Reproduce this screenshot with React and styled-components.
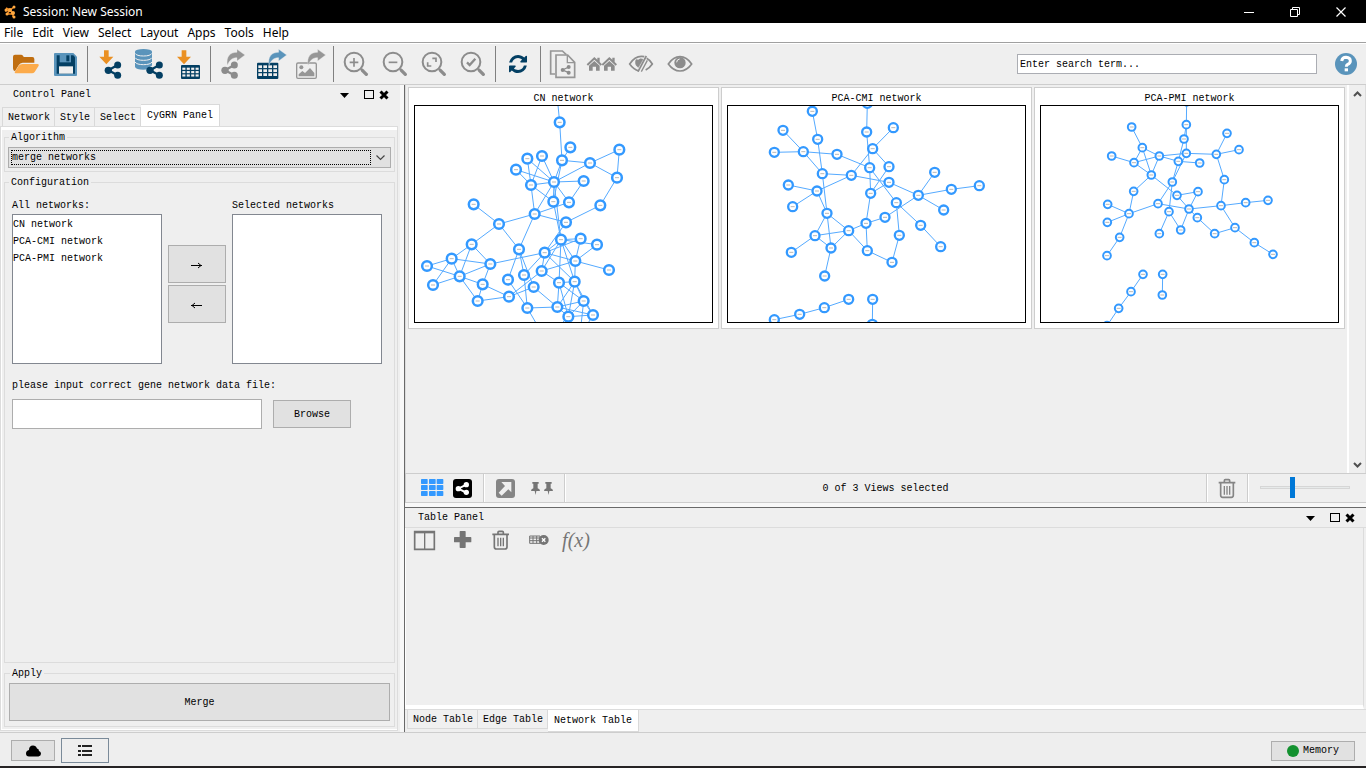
import React from "react";
import styled, { createGlobalStyle, css } from "styled-components";

const MONO = '"Liberation Mono", "Noto Sans CJK SC", monospace';
const SANS = '"Noto Sans", "Open Sans", sans-serif';
const GRAY = "#8c8c8c";
const NAVY = "#033f63";
const SKY = "#5a94bb";
const BLUE = "#3399ff";

const GlobalStyle = createGlobalStyle`
  *, *::before, *::after { box-sizing: border-box; }
  html, body { margin: 0; background: #efefef; }
  body { font: 10px/12px ${MONO}; color: #000; }
  button, input, select { font: inherit; color: inherit; margin: 0; }
`;

/* ---------- shell ---------- */
const Shell = styled.div`
  display: flex;
  flex-direction: column;
  min-height: 100vh;
  border-bottom: 2px solid #262324;
`;
const TitleBar = styled.header`
  display: flex;
  align-items: center;
  height: 23px;
  padding: 0 4px;
  gap: 7px;
  background: #000;
  color: #fff;
  font: 12px/20px ${SANS};
`;
const TitleText = styled.h1`
  flex: 1;
  margin: 0;
  font: inherit;
`;
const WindowButton = styled.button`
  width: 46px;
  height: 20px;
  padding: 0;
  border: 0;
  background: none;
  svg { display: block; margin: 0 auto; }
`;
const WindowButtons = styled.div`
  display: flex;
  margin-right: -2px;
`;
const MenuBar = styled.nav`
  display: flex;
  gap: 9px;
  height: 20px;
  padding: 0 4px;
  background: #fff;
  border-bottom: 1px solid #a0a0a0;
  font: 12px/19px ${SANS};
`;
const MenuLink = styled.a`
  color: #000;
  text-decoration: none;
`;
const ToolBar = styled.div`
  display: flex;
  align-items: center;
  height: 42px;
  padding: 0 9px 0 7px;
  border-top: 1px solid #fff;
  border-bottom: 1px solid #cdcdcd;
`;
const ToolButton = styled.button`
  display: block;
  padding: 0;
  border: 0;
  background: none;
  svg { display: block; }
`;
const ToolSeparator = styled.span`
  width: 1px;
  height: 36px;
  margin: 0 3px 0 2px;
  background: #808080;
`;
const SearchInput = styled.input`
  width: 300px;
  height: 20px;
  margin-left: auto;
  padding: 0 2px;
  border: 1px solid #abadb3;
  border-radius: 0;
  background: #fff;
  outline: 0;
  &::placeholder { color: #000; opacity: 1; }
`;
const HelpButton = styled(ToolButton)`
  margin-left: 18px;
`;
const Main = styled.main`
  display: flex;
  flex: 1;
`;

/* ---------- panels ---------- */
const Sidebar = styled.aside`
  display: flex;
  flex-direction: column;
  flex: 0 0 405px;
  padding-right: 6px;
  border-right: 1px solid #696969;
  box-shadow: inset -4px 0 #f8f8f8;
`;
const PanelHeader = styled.div`
  display: flex;
  align-items: center;
  height: 19px;
  padding: 0 ${(p) => (p.$wide ? 9 : 7)}px 0 13px;
`;
const PanelTitle = styled.h2`
  flex: 1;
  margin: 0;
  font: inherit;
`;
const PanelButton = styled.button`
  display: block;
  width: ${(p) => p.$w}px;
  height: 12px;
  padding: 0;
  border: 0;
  background: none;
  svg { display: block; }
`;
const TabRow = styled.div`
  display: flex;
  align-items: ${(p) => (p.$below ? "flex-start" : "flex-end")};
  padding-left: 2px;
`;
const Tab = styled.button`
  height: 19px;
  padding: 1px 4px 0 5px;
  border: 1px solid #d9d9d9;
  background: #f0f0f0;
  white-space: nowrap;
  & + & { border-left: 0; }
  ${(p) => (p.$below ? css`border-top: 0;` : css`border-bottom: 0;`)}
  ${(p) =>
    p.$active &&
    css`
      height: 22px;
      padding: 0 6px;
      background: #fff;
    `}
`;
const TabPane = styled.section`
  display: flex;
  flex-direction: column;
  flex: 1;
  gap: 3px;
  margin-bottom: 1px;
  padding: 3px 2px 3px 3px;
  border: 1px solid #dcdcdc;
  box-shadow: inset 0 3px #fff, inset 1px -1px #fff;
`;
const Group = styled.fieldset`
  display: flex;
  flex-direction: column;
  min-width: 0;
  margin: 0;
  padding: ${(p) => p.$pad || "3px"};
  border: 1px solid #dcdcdc;
  ${(p) => p.$grow && css`flex: 1;`}
`;
const Legend = styled.legend`
  margin-left: ${(p) => (p.$outdent ? -3 : 1)}px;
  padding: 2px 2px 0;
  line-height: 12px;
`;
const SelectFrame = styled.div`
  display: flex;
  align-items: center;
  height: 21px;
  padding-left: 2px;
  border: 1px solid #adadad;
  background: #e1e1e1;
  svg { margin: 0 5px; }
`;
const Select = styled.select`
  flex: 1;
  height: 15px;
  padding: 0;
  border: 1px dotted #000;
  border-radius: 0;
  background: none;
  appearance: none;
  outline: 0;
`;
const Transfer = styled.div`
  display: flex;
  align-items: flex-end;
  gap: 6px;
  padding-top: 8px;
`;
const ListField = styled.label`
  display: flex;
  flex-direction: column;
  gap: 2px;
`;
const ListBox = styled.select`
  width: 150px;
  height: 150px;
  padding: 4px 0;
  border: 1px solid #828790;
  border-radius: 0;
  background: #fff;
  outline: 0;
  overflow: hidden;
`;
const ListItem = styled.option`
  height: 17px;
  min-height: 17px;
  padding: 0;
  line-height: 17px;
`;
const TransferButtons = styled.div`
  display: flex;
  flex-direction: column;
  gap: 2px;
  align-self: flex-end;
  margin-bottom: 41px;
`;
const PushButton = styled.button`
  width: ${(p) => (p.$w ? `${p.$w}px` : "100%")};
  height: ${(p) => p.$h}px;
  padding: 1px 0 0;
  border: 1px solid #adadad;
  background: #e1e1e1;
  svg { display: block; margin: 0 auto; }
`;
const FileLabel = styled.label`
  margin-top: 16px;
`;
const FileRow = styled.div`
  display: flex;
  align-items: center;
  gap: 11px;
  margin-top: 7px;
`;
const FileInput = styled.input`
  width: 250px;
  height: 30px;
  padding: 0 4px;
  border: 1px solid #adadad;
  border-radius: 0;
  background: #fff;
  outline: 0;
`;

/* ---------- network views ---------- */
const Content = styled.div`
  display: flex;
  flex-direction: column;
  flex: 1;
  min-width: 0;
`;
const ViewArea = styled.div`
  display: flex;
  flex: 1;
  border-left: 1px solid #dcdcdc;
`;
const CardGrid = styled.div`
  display: grid;
  flex: 1;
  grid-template-columns: repeat(auto-fill, 311px);
  align-content: start;
  gap: 2px;
  padding: 2px 0 0 2px;
`;
const Card = styled.figure`
  margin: 0;
  padding: 4px 5px 5px;
  border: 1px solid #cdcdcd;
  background: #fff;
`;
const CardTitle = styled.figcaption`
  line-height: 13px;
  text-align: center;
`;
const Drawing = styled.svg`
  display: block;
  width: 100%;
  border: 1px solid #000;
`;
const ScrollTrack = styled.div`
  display: flex;
  flex-direction: column;
  justify-content: space-between;
  width: 19px;
  padding: 6px 0 5px 4px;
  border-left: 2px solid #fff;
  border-right: 1px solid #dcdcdc;
`;
const ViewBar = styled.div`
  display: flex;
  height: 30px;
  border: 1px solid #cdcdcd;
  border-right: 0;
`;
const BarSegment = styled.div`
  display: flex;
  align-items: center;
  gap: ${(p) => p.$gap || 0}px;
  padding: ${(p) => p.$pad};
  border-right: 1px solid #cdcdcd;
  box-shadow: 1px 0 #fff;
`;
const BarStatus = styled.output`
  flex: 1;
  padding-top: 1px;
  border-right: 1px solid #cdcdcd;
  box-shadow: 1px 0 #fff;
  line-height: 28px;
  text-align: center;
`;
const ZoomSlider = styled.input`
  width: 90px;
  height: 21px;
  margin: 3px 16px 3px 12px;
  background: none;
  appearance: none;
  &::-webkit-slider-runnable-track {
    height: 3px;
    border: 1px solid #d6d6d6;
    background: #e7eaea;
  }
  &::-webkit-slider-thumb {
    appearance: none;
    width: 5px;
    height: 21px;
    margin-top: -10px;
    background: #0078d7;
  }
`;
const TablePanel = styled.section`
  display: flex;
  flex-direction: column;
  flex: 0 0 229px;
  border-top: 4px solid #f8f8f8;
`;
const TableHead = styled.div`
  border-top: 1px solid #696969;
  border-bottom: 1px solid #dcdcdc;
`;
const TableBody = styled.div`
  flex: 1;
  margin-right: 2px;
  border-left: 1px solid #fff;
  border-right: 1px solid #dcdcdc;
  border-bottom: 4px solid #fff;
`;
const TableTools = styled.div`
  display: flex;
`;
const FormulaButton = styled(ToolButton)`
  width: 36px;
  height: 24px;
  color: #757575;
  font: italic 20px/22px "Liberation Serif", serif;
`;
const BottomTabs = styled.div`
  height: 23px;
  border-top: 1px solid #dcdcdc;
`;

/* ---------- status bar ---------- */
const StatusBar = styled.footer`
  display: flex;
  align-items: center;
  gap: 6px;
  height: 34px;
  padding: 2px 11px 0;
  border-top: 1px solid #cdcdcd;
  background: #eee;
`;
const StatusButton = styled(PushButton)`
  display: flex;
  align-items: center;
  justify-content: center;
  gap: 4px;
  padding: 0;
  svg { margin: 0; }
  ${(p) => p.$pressed && css`border-color: #7a8a99; background: #eee;`}
  ${(p) => p.$end && css`margin-left: auto;`}
`;

/* Icons are drawn on a grid of three units to the pixel. */
function Icon({ x, y = 138, w = 39, h = 36, children }) {
  return (
    <svg width={w} height={h} viewBox={`${x} ${y} ${w * 3} ${h * 3}`} aria-hidden="true">
      {children}
    </svg>
  );
}

function Share({ x, y, color = NAVY }) {
  return (
    <g fill={color} stroke={color}>
      <path d={`M${x + 28} ${y - 16}L${x} ${y}L${x + 28} ${y + 15}`} fill="none" strokeWidth="7" />
      <g stroke="none">
        <circle cx={x} cy={y} r="11" />
        <circle cx={x + 28} cy={y - 16} r="10.5" />
        <circle cx={x + 28} cy={y + 15} r="10.5" />
      </g>
    </g>
  );
}

function DownArrow({ x }) {
  return <path d={`M${x - 7} 151h14v19h14l-21 23l-21-23h14z`} fill="#ea9023" />;
}

function Grid({ x, y, w, h }) {
  const c = (w - 4) / 4;
  const r = (h - 4) / 4;
  return (
    <g>
      <rect x={x} y={y} width={w} height={h} rx="3" fill={NAVY} />
      {[0, 1, 2].map((i) =>
        [0, 1, 2, 3].map((j) => (
          <rect key={`${i}${j}`} x={x + 4 + j * c} y={y + 8 + i * (r + 0.6)} width={c - 4} height={r - 3} fill="#efefef" />
        ))
      )}
    </g>
  );
}

function OutArrow({ x, color }) {
  return (
    <path
      d={`M${x} 196C${x - 4} 170 ${x + 8} 157 ${x + 29} 157V148L${x + 53} 165L${x + 29} 183V173C${x + 14} 173 ${x + 6} 181 ${x} 196z`}
      fill={color}
      stroke="#efefef"
      strokeWidth="1"
    />
  );
}

function Magnifier({ x, children }) {
  return (
    <g fill="none" stroke={GRAY}>
      <circle cx={x} cy="186" r="28" strokeWidth="6" />
      <path d={`M${x + 21} 207l5 5`} strokeWidth="6" />
      <path d={`M${x + 25} 211l12 12`} strokeWidth="10" strokeLinecap="round" />
      {children}
    </g>
  );
}

function House({ x }) {
  return (
    <g fill={GRAY}>
      <path d={`M${x} 193L${x + 23} 171L${x + 32} 179V173h7v13l7 7l-4 4L${x + 23} 179L${x + 4} 197z`} />
      <path d={`M${x + 7} 197L${x + 23} 183L${x + 39} 197V212H${x + 28}V200H${x + 18}V212H${x + 7}z`} />
    </g>
  );
}

function Trash({ x, y, color = "#757575" }) {
  return (
    <g fill="none" stroke={color} strokeWidth="5" transform={`translate(${x} ${y})`}>
      <path d="M0 11H50M17 10V5q0-3 3-3h10q3 0 3 3v5M6 12v37q0 6 6 6h26q6 0 6-6V12" />
      <path d="M17 21v26M25 21v26M33 21v26" strokeWidth="4" />
    </g>
  );
}

function Pin({ x }) {
  return <path d={`M${x + 4} 66h19v5h-3v14q7 2 7 8H${x + 16}l-2 12l-3-12H${x}q0-6 7-8V71h-3z`} fill="#757575" />;
}

function WindowControls() {
  return (
    <>
      <PanelButton $w={24} aria-label="Panel menu">
        <svg width="10" height="12"><path d="M0 4h9L4.500 9z" /></svg>
      </PanelButton>
      <PanelButton $w={15} aria-label="Float panel">
        <svg width="12" height="12"><rect x="0.500" y="1.500" width="9" height="8" fill="none" stroke="#000" /></svg>
      </PanelButton>
      <PanelButton $w={12} aria-label="Close panel">
        <svg width="12" height="12"><path d="M1.500 2.500l7 7M8.500 2.500l-7 7" stroke="#000" strokeWidth="3" /></svg>
      </PanelButton>
    </>
  );
}

const toolGroups = [
  [
    ["Open session", 21, <g key="a">
      <path d="M39 170q0-6 6-6h19q4 0 6 5l1 2h26q6 0 6 6v11H68q-8 0-12 8L45 214q-6-2-6-9z" fill="#c06e10" />
      <path d="M68 192h45q5 0 3 5l-12 19q-3 4-8 4H47q-5 0-2-5l11-18q3-5 12-5z" fill="#fcab4b" />
    </g>],
    ["Save session", 138, <g key="b">
      <path d="M165 159H220l11 11V225q0 3-3 3H165q-3 0-3-3V162q0-3 3-3z" fill={SKY} />
      <path d="M170 166H220l5 6V221H170z" fill={NAVY} />
      <path d="M179 163h34v24h-34z" fill={SKY} />
      <path d="M199 166h9v18h-9z" fill={NAVY} />
      <path d="M177 199h42v22h-42z" fill="#efefef" />
    </g>],
  ],
  [
    ["Import network from file", 273, <g key="a"><DownArrow x={319} /><Share x={325} y={211} /></g>],
    ["Import network from database", 390, <g key="b">
      <path d="M405 155v46q4 8 25 8q8 0 13-1l7-8q6-2 6-4V155z" fill={SKY} />
      <ellipse cx="430.500" cy="155" rx="25.500" ry="8" fill={SKY} />
      <path d="M405 160q5 8 25.500 8t25.500-8M405 173q5 8 25.500 8t25.500-8M405 186q5 8 25.500 8t25.500-8" fill="none" stroke="#efefef" strokeWidth="3" />
      <Share x={450} y={211} />
    </g>],
    ["Import table from file", 507, <g key="c"><DownArrow x={552} /><Grid x={543} y={195} w={57} h={42} /></g>],
  ],
  [
    ["Export network", 642, <g key="a"><OutArrow x={682} color="#969696" /><Share x={675} y={211} color="#8c8c8c" /></g>],
    ["Export table", 759, <g key="b"><Grid x={771} y={188} w={64} h={49} /><OutArrow x={807} color={SKY} /></g>],
    ["Export image", 876, <g key="c">
      <rect x="890" y="189" width="59" height="46" rx="4" fill="none" stroke="#969696" strokeWidth="4" />
      <circle cx="904" cy="202" r="6" fill="#969696" />
      <path d="M896 229V223L907 213L915 219L930 204L943 219V229z" fill="#969696" />
      <OutArrow x={924} color="#969696" />
    </g>],
  ],
  [
    ["Zoom in", -9, <Magnifier key="a" x={42}><path d="M42 174v26M29 187h26" strokeWidth="5" /></Magnifier>],
    ["Zoom out", 108, <Magnifier key="b" x={159}><path d="M146 187h26" strokeWidth="5" /></Magnifier>],
    ["Fit content", 225, <Magnifier key="c" x={276}><path d="M277 175h11v11M263 187v11h11" strokeWidth="5" /></Magnifier>],
    ["Fit selected", 342, <Magnifier key="d" x={393}><path d="M381 187l8 8l17-19" strokeWidth="7" /></Magnifier>],
  ],
  [
    ["Apply layout", 477, <path key="a" fill={NAVY} transform="translate(507 165) scale(.0352)" d="M1511 928q0 5-1 7-64 268-268 434.500t-478 166.500q-146 0-282.500-55t-243.500-157l-129 129q-19 19-45 19t-45-19-19-45v-448q0-26 19-45t45-19h448q26 0 45 19t19 45-19 45l-137 137q71 66 161 102t187 36q134 0 250-65t186-179q11-17 53-117 8-23 30-23h192q13 0 22.500 9.500t9.500 22.500zm25-800v448q0 26-19 45t-45 19h-448q-26 0-45-19t-19-45 19-45l138-138q-148-137-349-137-134 0-250 65t-186 179q-11 17-53 117-8 23-30 23h-199q-13 0-22.500-9.500t-9.500-22.500v-7q65-268 270-434.500t480-166.500q146 0 284 55.500t245 156.500l130-129q19-19 45-19t45 19 19 45z" />],
  ],
  [
    ["New network from selection", 612, <g key="a">
      <path d="M645 222H632V153H667l12 11" fill="none" stroke="#969696" strokeWidth="5" />
      <path d="M648 232V165H683L704 187V232z" fill="#efefef" stroke="#969696" strokeWidth="5" />
      <path d="M682 165V188H704" fill="none" stroke="#969696" strokeWidth="4" />
      <g fill={GRAY}><circle cx="668" cy="210" r="6" /><circle cx="686" cy="201" r="6" /><circle cx="686" cy="218" r="6" /></g>
      <path d="M686 201L668 210L686 218" fill="none" stroke={GRAY} strokeWidth="4" />
    </g>],
    ["First neighbours", 729, <g key="b"><House x={740} /><House x={785} /></g>],
    ["Hide selected", 846, <g key="c" fill="none" stroke={GRAY} strokeWidth="5">
      <path d="M897 213Q880 208 869 192Q884 169 904 169q4 0 9 1M920 175Q931 181 937 192Q929 204 917 210" />
      <path d="M888 179q-5 16 7 23L909 178q-8-4-14 2z" fill={GRAY} strokeWidth="2" />
      <path d="M919 168L894 215" strokeWidth="5" />
      <path d="M922 181L904 215" strokeWidth="4" />
    </g>],
    ["Show all", 963, <g key="d">
      <path d="M985 192Q1000 170 1020 170T1055 192Q1040 213 1020 213T985 192z" fill="none" stroke={GRAY} strokeWidth="5" />
      <circle cx="1020" cy="188" r="17" fill={GRAY} />
      <path d="M1010 187q0-9 9-10" fill="none" stroke="#efefef" strokeWidth="3" />
    </g>],
  ],
];

const networks = [
  {
    name: "CN network", origin: 12, radius: 14.5, ring: 7.5,
    nodes: [[449,112],[481,187],[456,226],[540,234],[628,194],[621,278],[396,213],[352,221],[318,254],[363,300],[432,291],[521,288],[430,350],[477,352],[571,361],[374,387],[468,412],[191,358],[267,417],[185,478],[327,493],[453,464],[512,461],[561,479],[404,503],[496,528],[597,555],[125,521],[51,543],[241,537],[149,574],[69,600],[218,598],[203,648],[297,635],[294,584],[342,570],[395,558],[371,606],[447,593],[494,590],[352,669],[442,666],[521,648],[549,690],[475,695],[440,20],[390,735],[511,740],[440,730],[525,730]],
    edges: "0-46 0-2 1-2 2-3 3-4 4-5 3-5 5-14 14-16 3-10 2-10 10-6 10-7 10-8 8-9 7-9 6-9 9-10 9-15 9-12 10-15 10-12 10-13 10-11 11-13 2-12 13-15 15-18 15-16 15-20 17-18 18-19 18-20 10-21 12-21 16-24 21-22 21-23 21-24 21-25 22-25 23-25 22-24 25-26 21-39 21-40 21-37 24-25 24-37 24-40 24-36 24-29 25-37 25-40 19-27 19-29 19-30 27-28 27-29 27-30 27-31 28-30 30-31 29-30 30-32 30-33 29-32 32-33 32-34 33-34 34-37 34-38 20-35 20-36 20-38 35-41 36-41 41-42 38-42 39-40 39-42 39-43 40-43 40-42 40-45 40-44 42-43 42-45 42-44 43-45 43-44 44-45 39-45 37-39 41-47 43-48 45-49 44-50",
  },
  {
    name: "PCA-CMI network", origin: 21, radius: 13.5, ring: 7,
    nodes: [[277,79],[442,55],[189,136],[293,163],[440,141],[520,128],[163,202],[250,200],[351,208],[458,191],[449,248],[507,245],[307,266],[394,271],[507,292],[452,325],[205,300],[291,318],[218,365],[321,385],[285,452],[214,502],[386,437],[333,489],[314,573],[438,415],[442,497],[495,397],[529,353],[595,331],[644,262],[694,313],[778,302],[671,375],[602,421],[662,485],[538,451],[516,532],[163,704],[239,688],[313,668],[386,643],[458,643],[457,718]],
    edges: "0-3 3-12 1-4 4-10 2-7 6-7 7-8 7-12 8-10 5-9 9-11 9-13 10-15 11-15 14-15 12-13 13-14 13-17 16-17 17-18 17-19 12-19 19-20 19-22 19-23 20-21 20-22 20-23 22-23 23-24 22-25 22-26 25-26 15-25 25-27 27-29 14-29 10-28 28-34 28-36 36-37 26-37 34-35 29-30 29-31 31-32 29-33 38-39 39-40 40-41 42-43",
  },
  {
    name: "PCA-PMI network", origin: 30, radius: 11.5, ring: 6,
    nodes: [[470,50],[469,119],[462,162],[469,205],[305,126],[337,188],[245,213],[312,233],[388,213],[364,270],[445,229],[509,234],[559,208],[591,145],[627,194],[583,284],[427,291],[441,331],[504,320],[384,356],[417,380],[477,372],[573,362],[647,353],[714,346],[502,398],[554,446],[615,428],[673,473],[729,508],[452,435],[388,446],[311,319],[233,358],[297,386],[232,412],[269,457],[231,512],[339,568],[303,620],[266,670],[231,722],[398,568],[397,630]],
    edges: "0-1 1-3 1-2 2-10 3-16 10-16 4-5 5-7 5-8 5-9 6-7 7-8 7-9 8-9 3-8 8-10 3-12 10-11 12-13 12-14 12-15 15-22 9-32 9-17 32-34 33-34 34-35 34-36 36-37 19-34 16-19 19-21 16-20 20-31 20-30 21-30 17-21 17-18 18-21 21-22 22-23 23-24 21-25 25-26 26-27 22-27 27-28 28-29 38-39 39-40 40-41 42-43",
  },
];

function NetworkCard({ network }) {
  const { name, origin, nodes, edges, radius, ring } = network;
  return (
    <Card>
      <CardTitle>{name}</CardTitle>
      <Drawing viewBox={`${origin + 3} 63 891 648`} role="img" aria-label={name}>
        <g stroke="#55aaff" strokeWidth="3">
          {edges.split(" ").map((edge) => {
            const [a, b] = edge.split("-").map(Number);
            return <line key={edge} x1={nodes[a][0]} y1={nodes[a][1]} x2={nodes[b][0]} y2={nodes[b][1]} />;
          })}
        </g>
        {nodes.map(([x, y], i) => (
          <g key={i}>
            <circle cx={x} cy={y} r={radius} fill="#fff" stroke={BLUE} strokeWidth={ring} />
            <path d={`M${x - 6} ${y}h12`} stroke="#a8a8a8" strokeWidth="2.500" />
          </g>
        ))}
      </Drawing>
    </Card>
  );
}

export default function App() {
  return (
    <Shell>
      <GlobalStyle />
      <TitleBar>
        <svg width="12" height="14" aria-hidden="true">
          <path d="M2 3l4 2l4-3M6 5l3 4v3M6 5l-3 4M9 9l-6 0M1 6l5-1" stroke="#f08a24" strokeWidth="1.500" fill="none" />
          <g fill="#ffa940"><circle cx="2" cy="5" r="1.500" /><circle cx="6" cy="5" r="2" /><circle cx="10" cy="2" r="1.500" /><circle cx="9" cy="8" r="2" /><circle cx="3" cy="9" r="1.500" /><circle cx="10" cy="12" r="1.500" /></g>
        </svg>
        <TitleText>Session: New Session</TitleText>
        <WindowButtons>
          <WindowButton aria-label="Minimize"><svg width="12" height="12"><path d="M1 6.500h10" stroke="#fff" /></svg></WindowButton>
          <WindowButton aria-label="Restore"><svg width="12" height="12"><path d="M1.500 3.500h7v7h-7zM3.500 3.500v-2h7v7h-2" stroke="#fff" fill="none" /></svg></WindowButton>
          <WindowButton aria-label="Close"><svg width="12" height="12"><path d="M1.500 1.500l9 9M10.500 1.500l-9 9" stroke="#fff" strokeWidth="1.200" /></svg></WindowButton>
        </WindowButtons>
      </TitleBar>
      <MenuBar>
        {["File", "Edit", "View", "Select", "Layout", "Apps", "Tools", "Help"].map((m) => (
          <MenuLink key={m} href="#">{m}</MenuLink>
        ))}
      </MenuBar>
      <ToolBar>
        {toolGroups.map((group, i) => (
          <React.Fragment key={i}>
            {i > 0 && <ToolSeparator />}
            {group.map(([label, x, art]) => (
              <ToolButton key={label} aria-label={label}><Icon x={x}>{art}</Icon></ToolButton>
            ))}
          </React.Fragment>
        ))}
        <SearchInput type="text" placeholder="Enter search term..." aria-label="Search" />
        <HelpButton aria-label="Help">
          <svg width="22" height="22" viewBox="0 0 66 66">
            <circle cx="33" cy="33" r="33" fill={SKY} />
            <path d="M20 24Q22 13 33 13Q46 14 46 24Q46 31 38 34Q34 36 34 41" fill="none" stroke="#fff" strokeWidth="9" />
            <rect x="29" y="46" width="10" height="9" fill="#fff" />
          </svg>
        </HelpButton>
      </ToolBar>

      <Main>
        <Sidebar>
          <PanelHeader>
            <PanelTitle>Control Panel</PanelTitle>
            <WindowControls />
          </PanelHeader>
          <TabRow role="tablist">
            <Tab role="tab">Network</Tab>
            <Tab role="tab">Style</Tab>
            <Tab role="tab">Select</Tab>
            <Tab role="tab" $active aria-selected="true">CyGRN Panel</Tab>
          </TabRow>
          <TabPane>
            <Group>
              <Legend>Algorithm</Legend>
              <SelectFrame>
                <Select aria-label="Algorithm"><option>merge networks</option></Select>
                <svg width="9" height="6"><path d="M0.500 0.500l4 4l4-4" fill="none" stroke="#444" strokeWidth="1.200" /></svg>
              </SelectFrame>
            </Group>
            <Group $grow $pad="3px 7px">
              <Legend $outdent>Configuration</Legend>
              <Transfer>
                <ListField>
                  All networks:
                  <ListBox multiple>
                    {networks.map((n) => <ListItem key={n.name}>{n.name}</ListItem>)}
                  </ListBox>
                </ListField>
                <TransferButtons>
                  <PushButton $w={58} $h={38} aria-label="Add">
                    <svg width="12" height="8"><path d="M0 4.500h11M7 2l3 2.500l-3 2.500" fill="none" stroke="#000" /></svg>
                  </PushButton>
                  <PushButton $w={58} $h={38} aria-label="Remove">
                    <svg width="12" height="8"><path d="M0 4.500h11M4 2l-3 2.500l3 2.500" fill="none" stroke="#000" /></svg>
                  </PushButton>
                </TransferButtons>
                <ListField>
                  Selected networks
                  <ListBox multiple />
                </ListField>
              </Transfer>
              <FileLabel htmlFor="data-file">please input correct gene network data file:</FileLabel>
              <FileRow>
                <FileInput id="data-file" type="text" />
                <PushButton $w={78} $h={28}>Browse</PushButton>
              </FileRow>
            </Group>
            <Group $pad="3px 4px 5px">
              <Legend>Apply</Legend>
              <PushButton $h={38}>Merge</PushButton>
            </Group>
          </TabPane>
        </Sidebar>

        <Content>
          <ViewArea>
            <CardGrid>
              {networks.map((n) => <NetworkCard key={n.name} network={n} />)}
            </CardGrid>
            <ScrollTrack>
              <svg width="9" height="6"><path d="M1 5l3.500-3.500L8 5" fill="none" stroke="#505050" strokeWidth="2" /></svg>
              <svg width="9" height="6"><path d="M1 1l3.500 3.500L8 1" fill="none" stroke="#505050" strokeWidth="2" /></svg>
            </ScrollTrack>
          </ViewArea>
          <ViewBar>
            <BarSegment $pad="0 6px 0 12px" $gap={3}>
              <ToolButton aria-label="Grid view">
                <Icon x={54} y={42} w={28} h={28}>
                  {[57, 75, 93].map((y) => [63, 87, 110].map((x) => (
                    <rect key={`${x}-${y}`} x={x} y={y} width="20" height="15" rx="2" fill={BLUE} />
                  )))}
                </Icon>
              </ToolButton>
              <ToolButton aria-label="Network view">
                <Icon x={147} y={42} w={28} h={28}>
                  <rect x="159" y="57" width="57" height="57" rx="9" />
                  <path d="M199 74L175 86L199 98" fill="none" stroke="#fff" strokeWidth="6" />
                  <g fill="#fff"><circle cx="175" cy="86" r="8" /><circle cx="199" cy="74" r="8" /><circle cx="199" cy="97" r="8" /></g>
                </Icon>
              </ToolButton>
            </BarSegment>
            <BarSegment $pad="0 8px" $gap={8}>
              <ToolButton aria-label="Detach views">
                <Icon x={276} y={42} w={28} h={28}>
                  <rect x="288" y="57" width="57" height="57" rx="9" fill="#858585" />
                  <path d="M304 66H334V97L325 88L305 107L296 98L315 78z" fill="#efefef" />
                </Icon>
              </ToolButton>
              <ToolButton aria-label="Pin views">
                <Icon x={384} y={42} w={28} h={28}><Pin x={393} /><Pin x={432} /></Icon>
              </ToolButton>
            </BarSegment>
            <BarStatus>0 of 3 Views selected</BarStatus>
            <BarSegment $pad="0 6px">
              <ToolButton aria-label="Destroy views">
                <Icon x={0} y={0} w={28} h={28}><Trash x={17} y={15} color="#858585" /></Icon>
              </ToolButton>
            </BarSegment>
            <ZoomSlider type="range" min="0" max="100" defaultValue="35" aria-label="Thumbnail size" />
          </ViewBar>
          <TablePanel>
            <TableHead>
              <PanelHeader $wide>
                <PanelTitle>Table Panel</PanelTitle>
                <WindowControls />
              </PanelHeader>
            </TableHead>
            <TableBody>
              <TableTools>
                <ToolButton aria-label="Show columns">
                  <Icon x={18} y={204} w={38} h={26}>
                    <path d="M44 215H103V268H44z" fill="none" stroke="#757575" strokeWidth="5" />
                    <path d="M42 213H105V220H42z" fill="#757575" />
                    <path d="M74 215V268" stroke="#757575" strokeWidth="4" />
                  </Icon>
                </ToolButton>
                <ToolButton aria-label="Create column">
                  <Icon x={132} y={204} w={38} h={26}>
                    <path d="M181 213h14q2 0 2 2v16h15q2 0 2 2v12q0 2-2 2h-15v15q0 2-2 2h-14q-2 0-2-2v-15h-15q-2 0-2-2v-12q0-2 2-2h15v-16q0-2 2-2z" fill="#757575" />
                  </Icon>
                </ToolButton>
                <ToolButton aria-label="Delete column">
                  <Icon x={246} y={204} w={38} h={26}><Trash x={277} y={212} /></Icon>
                </ToolButton>
                <ToolButton aria-label="Delete table">
                  <Icon x={360} y={204} w={38} h={26}>
                    <path d="M389 228H420V250H389zM389 234H420M389 242H420M399 228V250M410 228V250" fill="none" stroke="#757575" strokeWidth="3" />
                    <circle cx="431" cy="240" r="15" fill="#757575" />
                    <path d="M426 235l10 10M436 235l-10 10" stroke="#fff" strokeWidth="4" />
                  </Icon>
                </ToolButton>
                <FormulaButton aria-label="Function builder">f(x)</FormulaButton>
              </TableTools>
            </TableBody>
            <BottomTabs>
              <TabRow role="tablist" $below>
                <Tab role="tab" $below>Node Table</Tab>
                <Tab role="tab" $below>Edge Table</Tab>
                <Tab role="tab" $below $active aria-selected="true">Network Table</Tab>
              </TabRow>
            </BottomTabs>
          </TablePanel>
        </Content>
      </Main>

      <StatusBar>
        <StatusButton $w={44} $h={21} aria-label="Cloud">
          <svg width="15" height="12"><path d="M3 11.500q-3 0-3-3t3-3.500q0-4.500 4-4.500q3 0 4 3q2 0 2 2.500q2 .5 2 2.700t-2.500 2.800z" /></svg>
        </StatusButton>
        <StatusButton $w={48} $h={25} $pressed aria-label="Task list">
          <svg width="14" height="12" fill="#222"><path d="M0 0h3v2H0zM4 0h10v2H4zM0 5h3v2H0zM4 5h10v2H4zM0 9h3v2H0zM4 9h10v2H4z" /></svg>
        </StatusButton>
        <StatusButton $w={84} $h={20} $end>
          <svg width="12" height="12"><circle cx="6" cy="6" r="6" fill="#12912f" /></svg>
          Memory
        </StatusButton>
      </StatusBar>
    </Shell>
  );
}
